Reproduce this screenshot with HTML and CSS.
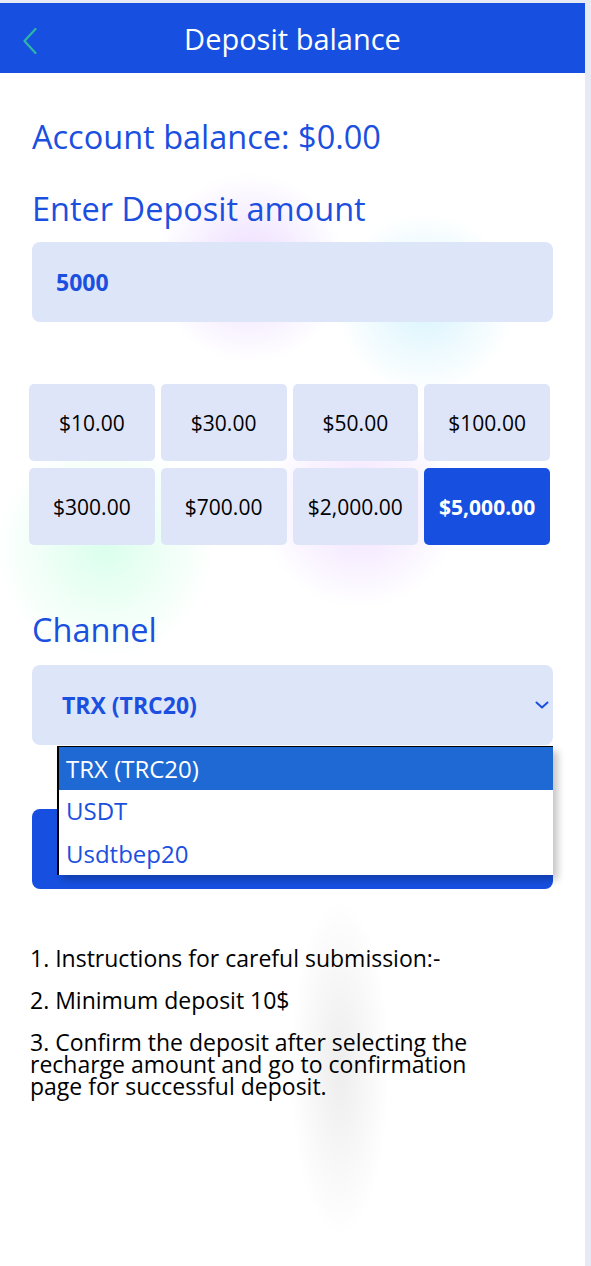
FILE: index.html
```html
<!DOCTYPE html>
<html lang="en">
<head>
<meta charset="utf-8">
<title>Deposit balance</title>
<link rel="stylesheet" href="styles.css">
</head>
<body>
<div class="app">
  <header class="topbar">
    <span class="back" aria-label="Back">
      <svg width="14" height="26" viewBox="0 0 14 26"><polyline points="12.5,1 1.5,13 12.5,25" fill="none" stroke="#2bb7a2" stroke-width="2.2" stroke-linecap="round" stroke-linejoin="round"/></svg>
    </span>
    <h1 class="title">Deposit balance</h1>
  </header>

  <main class="content">
    <p class="heading balance">Account balance: $0.00</p>
    <p class="heading label">Enter Deposit amount</p>
    <div class="field amount">5000</div>

    <div class="presets">
      <div class="preset">$10.00</div>
      <div class="preset">$30.00</div>
      <div class="preset">$50.00</div>
      <div class="preset">$100.00</div>
      <div class="preset">$300.00</div>
      <div class="preset">$700.00</div>
      <div class="preset">$2,000.00</div>
      <div class="preset active">$5,000.00</div>
    </div>

    <p class="heading channel-label">Channel</p>
    <div class="select-wrap">
      <div class="field select">
        <span>TRX (TRC20)</span>
        <svg class="caret" width="14" height="8" viewBox="0 0 14 8"><polyline points="1.5,1.5 7,6.5 12.5,1.5" fill="none" stroke="#1a4fe0" stroke-width="2" stroke-linecap="round" stroke-linejoin="round"/></svg>
      </div>
      <ul class="options">
        <li class="option selected">TRX (TRC20)</li>
        <li class="option">USDT</li>
        <li class="option">Usdtbep20</li>
      </ul>
    </div>

    <div class="submit"></div>

    <div class="notes">
      <p>1. Instructions for careful submission:-</p>
      <p>2. Minimum deposit 10$</p>
      <p>3. Confirm the deposit after selecting the recharge amount and go to confirmation page for successful deposit.</p>
    </div>
  </main>
</div>
</body>
</html>
```
FILE: styles.css
```css
* {
  box-sizing: border-box;
}

html, body {
  margin: 0;
  padding: 0;
}

body {
  background: #e6eaf4;
  font-family: "Open Sans", "Noto Sans", sans-serif;
}

.app {
  width: 585px;
  height: 1263px;
  margin-top: 3px;
  overflow: hidden;
  background-color: #ffffff;
  background-image:
    radial-gradient(ellipse 50px 170px at 340px 1065px, rgba(0, 0, 0, 0.07), rgba(0, 0, 0, 0) 100%),
    radial-gradient(circle 95px at 250px 265px, rgba(205, 160, 255, 0.38), rgba(205, 160, 255, 0) 100%),
    radial-gradient(circle 90px at 425px 300px, rgba(150, 225, 250, 0.38), rgba(150, 225, 250, 0) 100%),
    radial-gradient(circle 110px at 105px 545px, rgba(160, 255, 205, 0.38), rgba(160, 255, 205, 0) 100%),
    radial-gradient(circle 100px at 360px 505px, rgba(215, 170, 255, 0.38), rgba(215, 170, 255, 0) 100%);
  background-repeat: no-repeat;
}

/* top bar */
.topbar {
  position: relative;
  height: 70px;
  background: #1750e0;
  display: flex;
  align-items: center;
  justify-content: center;
}

.back {
  position: absolute;
  left: 23px;
  top: 25px;
  width: 14px;
  height: 26px;
  display: flex;
}

.title {
  margin: 0;
  color: #ffffff;
  font-size: 29px;
  font-weight: 400;
  line-height: 1;
}

/* body */
.content {
  padding: 0 32px;
}

.heading {
  margin: 0;
  padding-top: 3px;
  color: #1a4fe0;
  font-size: 32.5px;
  line-height: 42px;
  font-weight: 400;
}

.balance {
  margin-top: 40px;
}

.label {
  margin-top: 27px;
}

.field {
  height: 80px;
  border-radius: 8px;
  background: #dde5f9;
  color: #1a4fe0;
  font-weight: 700;
  font-size: 23px;
  display: flex;
  align-items: center;
}

.amount {
  margin-top: 12px;
  padding-left: 24px;
}

/* preset amounts */
.presets {
  margin: 62px 0 0 -3px;
  width: 521px;
  display: grid;
  grid-template-columns: repeat(4, 1fr);
  column-gap: 6px;
  row-gap: 7px;
}

.preset {
  height: 77px;
  border-radius: 5px;
  background: #dee5f9;
  color: #000000;
  font-size: 21px;
  display: flex;
  align-items: center;
  justify-content: center;
}

.preset.active {
  background: #1750e0;
  color: #ffffff;
  font-weight: 700;
}

.channel-label {
  margin-top: 61px;
}

/* channel select with its open list */
.select-wrap {
  position: relative;
  margin-top: 14px;
}

.select {
  padding: 0 4px 0 30px;
  justify-content: space-between;
}

.caret {
  display: block;
}

.options {
  position: absolute;
  z-index: 2;
  left: 25px;
  top: 81px;
  width: 496px;
  margin: 0;
  padding: 0;
  list-style: none;
  background: #ffffff;
  border-left: 2px solid #000000;
  border-top: 1px solid #000000;
  box-shadow: 5px 5px 7px rgba(0, 0, 0, 0.22);
}

.option {
  height: 42.5px;
  padding-left: 7px;
  display: flex;
  align-items: center;
  font-size: 24px;
  color: #1a4fe0;
}

.option.selected {
  background: #1e69d4;
  color: #ffffff;
}

.submit {
  margin-top: 64px;
  height: 80px;
  border-radius: 8px;
  background: #1750e0;
}

/* instructions */
.notes {
  margin: 58px 0 0 -2px;
  width: 478px;
  color: #000000;
  font-size: 23px;
  line-height: 22px;
}

.notes p {
  margin: 0 0 20px;
}
```
